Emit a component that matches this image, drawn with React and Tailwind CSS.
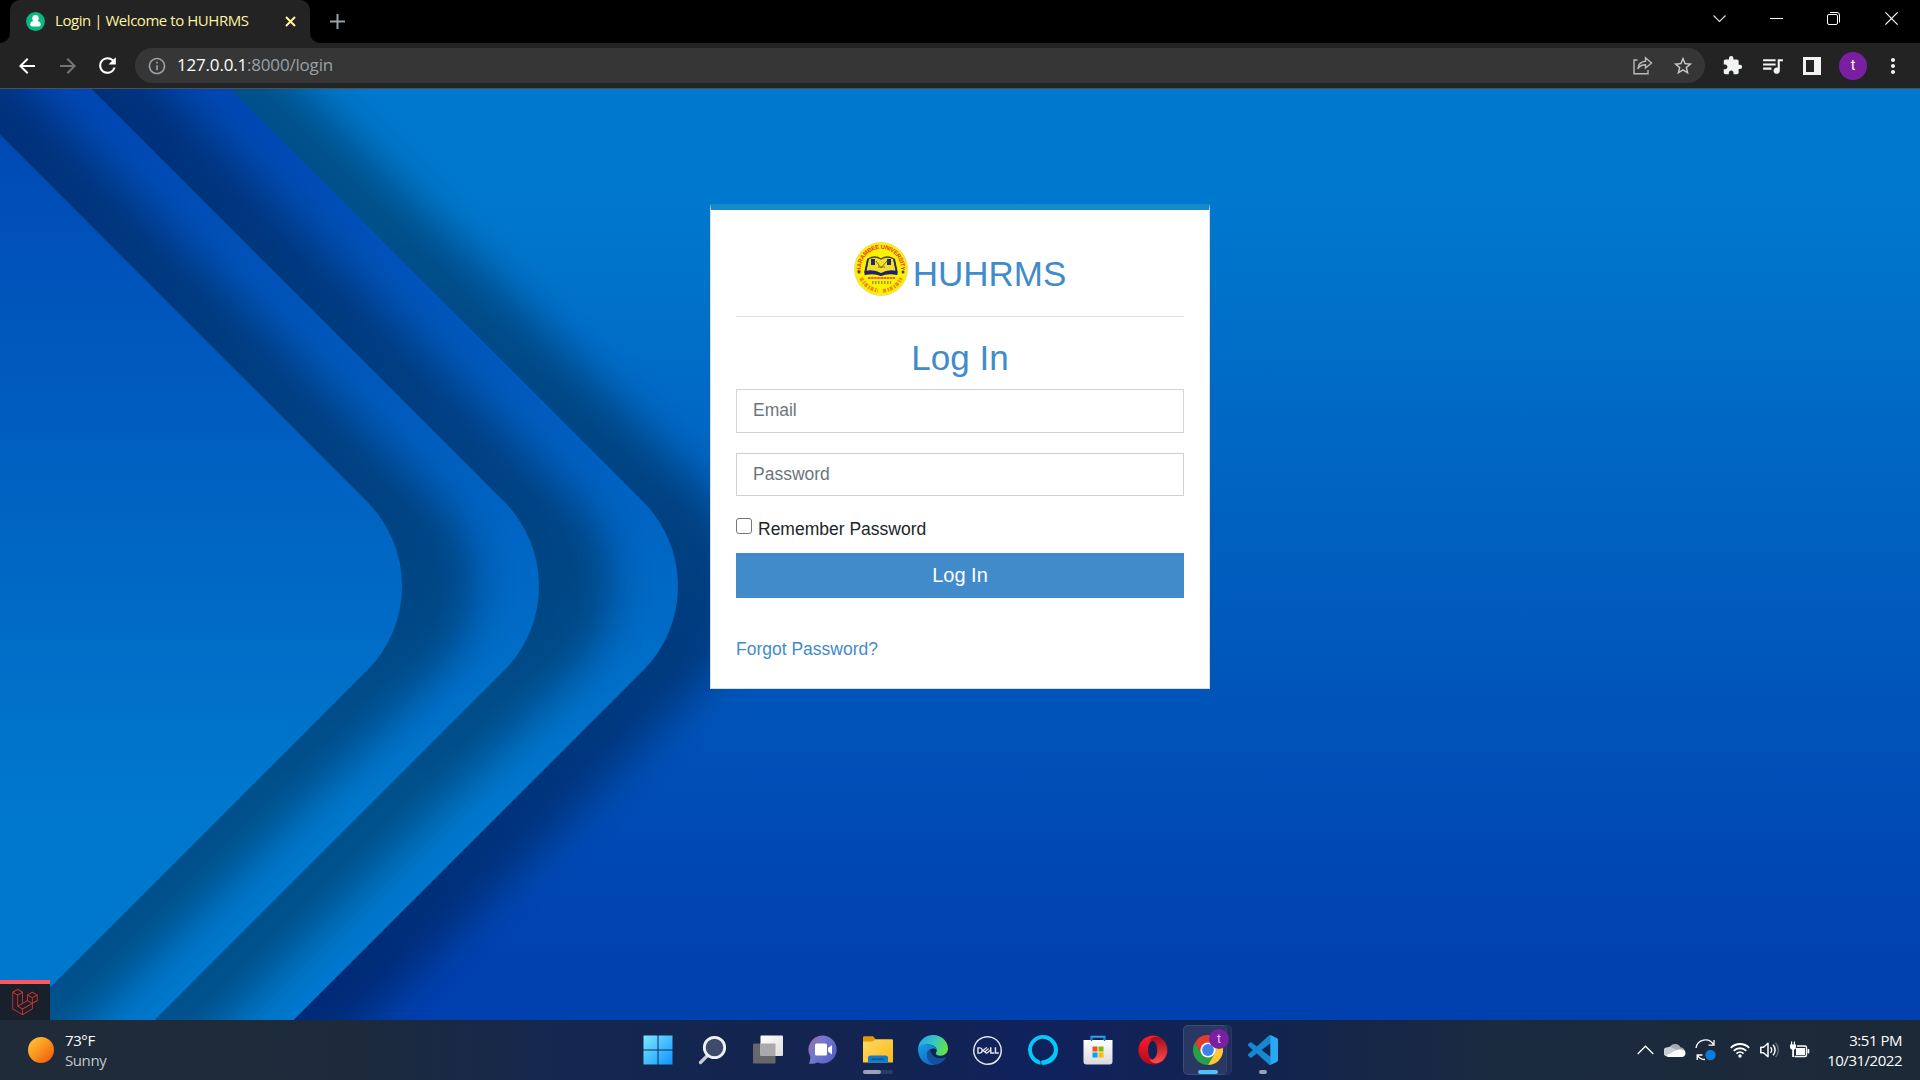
import React from "react";
import {
  MdArrowBack,
  MdArrowForward,
  MdRefresh,
  MdInfoOutline,
  MdStarBorder,
  MdExtension,
  MdQueueMusic,
  MdMoreVert,
} from "react-icons/md";
import { SiLaravel, SiDell } from "react-icons/si";

const CHEVRON = "M-400 -265.4 L367 501.6 A119.5 119.5 0 0 1 367 670.6 L-400 1437.6 Z";

function TabStrip() {
  return (
    <div className="flex h-[43px] items-start bg-black pl-[10px]">
      <div className="relative flex h-[43px] w-[300px] items-center rounded-t-[10px] bg-[#232323] pl-4 pr-[14px]">
        <svg className="absolute -left-[10px] bottom-0" width="10" height="10"><path d="M10 0V10H0A10 10 0 0 0 10 0Z" fill="#232323" /></svg>
        <svg className="absolute -right-[10px] bottom-0" width="10" height="10"><path d="M0 0V10H10A10 10 0 0 1 0 0Z" fill="#232323" /></svg>
        <svg width="19" height="19" viewBox="0 0 19 19" className="shrink-0">
          <circle cx="9.5" cy="9.5" r="9.4" fill="#0bb783" />
          <path d="M9.5 3a3.2 3.4 0 0 1 3.2 3.4c0 1-.5 2-1.1 2.6 1.900.3 3.200 1.500 3.200 3.500 0 1.300-1 1.900-2.300 1.900H6.500c-1.300 0-2.300-.6-2.300-1.900 0-2 1.300-3.200 3.200-3.500A3.600 3.600 0 0 1 6.300 6.400 3.200 3.400 0 0 1 9.500 3Z" fill="#fff" />
        </svg>
        <span className="mb-[3px] ml-[10px] grow whitespace-nowrap font-['Open_Sans','Noto_Sans',sans-serif] text-[15px] leading-5 tracking-[-0.45px] text-[#fdf3a0]">Login | Welcome to HUHRMS</span>
        <svg width="11" height="11" viewBox="0 0 11 11"><path d="M1 1 10 10M10 1 1 10" stroke="#fdf3a0" strokeWidth="2" /></svg>
      </div>
      <svg className="ml-5 mt-[14px]" width="15" height="15" viewBox="0 0 15 15"><path d="M7.500 0V15M0 7.500H15" stroke="#9aa0a6" strokeWidth="2" /></svg>
      <div className="flex grow justify-end">
        <svg className="mr-[44px] mt-[15px]" width="13" height="8" viewBox="0 0 13 8"><path d="M.5.5 6.500 6.500 12.500.5" fill="none" stroke="#ddd" strokeWidth="1.100" /></svg>
        <svg className="mr-[44px] mt-[18px]" width="13" height="1"><rect width="13" height="1" fill="#fff" /></svg>
        <svg className="mr-[45px] mt-[12px]" width="13" height="13" viewBox="0 0 13 13"><rect x=".5" y="2.500" width="10" height="10" rx="1.500" fill="none" stroke="#fff" /><path d="M3 .5H10A2.500 2.500 0 0 1 12.500 3V10.500" fill="none" stroke="#fff" /></svg>
        <svg className="mr-[22px] mt-[12px]" width="13" height="13" viewBox="0 0 13 13"><path d="M.4.4 12.600 12.600M12.600.4.4 12.600" stroke="#fff" strokeWidth="1.200" /></svg>
      </div>
    </div>
  );
}

function Toolbar() {
  return (
    <div className="flex h-[46px] items-center border-b border-[#505050] bg-[#232323] pl-[15px]">
      <MdArrowBack size={24} color="#fff" />
      <MdArrowForward size={24} color="#757575" className="ml-[17px]" />
      <MdRefresh size={25} color="#fff" className="ml-[15px]" />
      <div className="ml-[15px] flex h-[35px] w-[1570px] items-center rounded-full bg-[#363636] pl-[12px] pr-[11px]">
        <MdInfoOutline size={20} color="#9aa0a6" />
        <span className="ml-[10px] grow pb-px font-['Open_Sans','Noto_Sans',sans-serif] text-[17px] leading-6 tracking-[-0.19px] text-[#9aa0a6]">
          <span className="text-white">127.0.0.1</span>:8000/login
        </span>
        <svg className="mr-[19px]" width="20" height="19" viewBox="0 0 20 19" fill="none" stroke="#b9b9b9" strokeWidth="1.400">
          <path d="M4.500 4H1V17.800H15V14" />
          <path d="M4.800 12.800C5.400 8 8.500 5.600 12.500 5.300V1.800L18.500 7 12.500 12.100V8.800C9 8.800 6.600 10 4.800 12.800Z" />
        </svg>
        <MdStarBorder size={22} color="#c8c8c8" />
      </div>
      <MdExtension size={21} color="#f1f3f4" className="ml-[17px]" />
      <MdQueueMusic size={25} color="#f1f3f4" className="ml-[17px]" />
      <svg className="ml-[18px]" width="18" height="18"><path d="M0 0H18V18H0ZM3 3V15H11V3Z" fill="#f1f3f4" fillRule="evenodd" /></svg>
      <div className="ml-[18px] flex size-7 items-center justify-center rounded-full bg-[#7b1fa2] pb-px font-['Roboto',sans-serif] text-[14px] text-white">t</div>
      <MdMoreVert size={24} color="#f1f3f4" className="ml-[14px]" />
    </div>
  );
}

function Backdrop() {
  return (
    <svg className="absolute inset-0" width="1920" height="931" viewBox="0 89 1920 931">
      <defs>
        <linearGradient id="sky" gradientUnits="userSpaceOnUse" x1="0" y1="200" x2="0" y2="975">
          <stop offset="0" stopColor="#0078cd" />
          <stop offset="1" stopColor="#0040af" />
        </linearGradient>
        <linearGradient id="band" gradientUnits="userSpaceOnUse" x1="0" y1="110" x2="0" y2="810">
          <stop offset="0" stopColor="#0048b4" />
          <stop offset="1" stopColor="#0078cd" />
        </linearGradient>
        <filter id="soft" filterUnits="userSpaceOnUse" x="-500" y="-400" width="1500" height="2000">
          <feGaussianBlur stdDeviation="21" />
        </filter>
      </defs>
      <rect y="89" width="1920" height="931" fill="url(#sky)" />
      {[276, 137, 0].map((x) => (
        <g key={x} transform={`translate(${x} 0)`}>
          <path d={CHEVRON} transform="translate(74 0)" fill="#000" opacity=".32" filter="url(#soft)" />
          <path d={CHEVRON} fill="url(#band)" />
        </g>
      ))}
    </svg>
  );
}

function Seal() {
  return (
    <svg width="54" height="54" viewBox="0 0 54 54" className="shrink-0">
      <defs>
        <path id="rim" d="M8.500 34.500A20 20 0 1 1 45.500 34.500" />
      </defs>
      <circle cx="27" cy="27" r="26.500" fill="#fbf200" stroke="#d8d27a" strokeWidth=".7" />
      <text fontFamily="Liberation Sans, sans-serif" fontWeight="700" fontSize="6" fill="#f0301a">
        <textPath href="#rim" startOffset="5" textLength="67">HARAMBEE UNIVERSITY</textPath>
      </text>
      <path d="M14 17Q21 13 27 17Q33 13 40 17L43 32Q34 29 27 33Q20 29 11 32Z" fill="#f3df25" stroke="#4c4a36" strokeWidth="1.300" />
      <path d="M11 29Q20 27 27 31Q34 27 43 29V33Q34 31 27 34Q20 31 11 33Z" fill="#20206f" />
      <path d="M14 17 11 31M40 17 43 31" stroke="#262672" strokeWidth="1.800" />
      <path d="M19 17V23M35 17V23" stroke="#26256f" strokeWidth="4" />
      <path d="M22 19 27 26 33 19M24 25H31" stroke="#77702d" fill="none" />
      <path d="M14 36H41" stroke="#ef5a1c" strokeWidth="2.200" strokeDasharray="2.500 .6" />
      <path d="M18 40.500H37" stroke="#9a9650" strokeWidth="3" strokeDasharray="1.500 1.500" />
      <path d="M7 36Q13 47 24 48.500M29 49Q42 47 47 36" stroke="#f58a12" strokeWidth="4" strokeDasharray="3 1.600 1.500 1" fill="none" />
      <circle cx="5" cy="30" r="1.500" fill="#44443c" /><circle cx="49" cy="30" r="1.500" fill="#44443c" />
    </svg>
  );
}

function LoginCard() {
  return (
    <form className="relative mx-auto h-[485px] w-[500px] border border-t-[6px] border-[#dcdcdc] border-t-[#138bc8] bg-white px-[25px] font-['Liberation_Sans',Arial,sans-serif] text-[17.5px] text-[#212529]">
      <div className="flex h-[107px] items-start justify-center border-b border-[#e3e3e3] pt-8">
        <Seal />
        <span className="ml-[5px] mt-[11px] text-[35px] leading-[42px] text-[#428bca]">HUHRMS</span>
      </div>
      <h1 className="mt-[20px] text-center text-[35px] leading-[42px] text-[#428bca]">Log In</h1>
      <input placeholder="Email" className="mt-[10px] block h-[44px] w-full border border-[#ced4da] px-4 pb-[2px] placeholder:text-[#6c757d]" />
      <input placeholder="Password" className="mt-5 block h-[43px] w-full border border-[#d0d0d0] px-4 pb-[1px] placeholder:text-[#6c757d]" />
      <label className="mt-[18px] flex h-[28px] items-start">
        <input type="checkbox" className="mt-[4px] size-4 appearance-none rounded-[3px] border border-[#767676] bg-white" />
        <span className="ml-[6px] mt-[2px] leading-[26px]">Remember Password</span>
      </label>
      <button type="button" className="mt-[11px] block h-[45px] w-full bg-[#428bca] text-[20px] leading-[45px] text-white">Log In</button>
      <a className="mt-[38px] block leading-[26px] text-[#428bca]">Forgot Password?</a>
    </form>
  );
}

function WindowsLogo() {
  return (
    <svg width="30" height="30" viewBox="0 0 30 30">
      <defs><linearGradient id="win" x1="0" y1="0" x2="30" y2="30" gradientUnits="userSpaceOnUse"><stop stopColor="#7eeaff" /><stop offset="1" stopColor="#0b93ff" /></linearGradient></defs>
      <path d="M1 .5H14.500V14.500H.5V1ZM15.500.5H29.500V14.500H15.500ZM.5 15.500H14.500V29.500H.5ZM15.500 15.500H29.500V29.500H15.500Z" fill="url(#win)" />
    </svg>
  );
}

function SearchLogo() {
  return (
    <svg width="30" height="30" viewBox="0 0 30 30">
      <path d="M10 20 2.500 27.500" stroke="#c9ccd2" strokeWidth="3.200" strokeLinecap="round" />
      <circle cx="16.500" cy="12.500" r="10.200" fill="#3d4b6c" stroke="#f0f1f3" strokeWidth="2.800" />
    </svg>
  );
}

function TaskViewLogo() {
  return (
    <svg width="30" height="30" viewBox="0 0 30 30">
      <defs><linearGradient id="tv" x1="0" y1="0" x2="1" y2="1"><stop stopColor="#fff" /><stop offset="1" stopColor="#dedede" /></linearGradient></defs>
      <rect x="0" y="8.500" width="22.500" height="20" rx="1" fill="#65676b" />
      <rect x="7.500" y=".5" width="22.500" height="20.500" rx="1" fill="url(#tv)" />
      <path d="M7.500 8.500H22.500V21H8.500A1 1 0 0 1 7.500 20Z" fill="#a9aaab" />
    </svg>
  );
}

function ChatLogo() {
  return (
    <svg width="30" height="30" viewBox="0 0 30 30">
      <defs><linearGradient id="chat" x1="0" y1="0" x2="1" y2=".6"><stop stopColor="#a06aa5" /><stop offset=".45" stopColor="#7378cf" /><stop offset="1" stopColor="#5a62c8" /></linearGradient></defs>
      <path d="M15 .5A14 14 0 1 1 9.500 27.500C6.500 29 3.500 29 .8 28.500 2.200 26.500 2.500 24 2.200 21.200A14 14 0 0 1 15 .5Z" fill="url(#chat)" />
      <rect x="7" y="8.500" width="12" height="12" rx="1.500" fill="#fff" />
      <path d="M20 13 24 10V19.500L20 16.500Z" fill="#fff" />
    </svg>
  );
}

function FolderLogo() {
  return (
    <svg width="30" height="30" viewBox="0 0 30 30">
      <defs><linearGradient id="fold" x1="0" y1="0" x2="1" y2="1"><stop stopColor="#ffda67" /><stop offset="1" stopColor="#fdb813" /></linearGradient></defs>
      <path d="M0 2.500A1.200 1.200 0 0 1 1.200 1.300H10L13 4.500V9H0Z" fill="#e09a08" />
      <path d="M0 6.500H9.500L13 4.300H28.800A1.200 1.200 0 0 1 30 5.500V27.500H0Z" fill="url(#fold)" />
      <path d="M5 27.500V23A2.500 2.500 0 0 1 7.500 20.500H22.500A2.500 2.500 0 0 1 25 23V27.500Z" fill="#0f7bd0" />
      <path d="M8.500 24.200H21.500" stroke="#0b4a88" strokeWidth="1.200" />
    </svg>
  );
}

function EdgeLogo() {
  return (
    <svg width="30" height="30" viewBox="0 0 30 30">
      <defs>
        <linearGradient id="edgeTop" x1="0" y1=".3" x2="1" y2=".6"><stop stopColor="#28a8e8" /><stop offset=".5" stopColor="#33c6c2" /><stop offset="1" stopColor="#6ae43f" /></linearGradient>
        <linearGradient id="edgeLow" x1="0" y1="0" x2=".6" y2="1"><stop stopColor="#1b9ee2" /><stop offset="1" stopColor="#0f6cc4" /></linearGradient>
      </defs>
      <path d="M0 14C.5 6 7 0 15 0C24 0 30 6.500 30 13.500C30 18 26.500 20.700 22.500 20.700C19.500 20.700 17.800 19.700 17.800 18.600C17.800 17.700 18.800 17.200 18.800 15.300C18.800 12.500 15.500 10 11 9.600C5 9.300 1 11.500 0 14Z" fill="url(#edgeTop)" />
      <path d="M0 14C1 10.500 5 9 9 9.200C14.500 9.500 18.800 12.500 18.800 15.300C18 12.700 12 12.500 9.500 17C7.500 21.500 11.500 28 17 29.800C7 31.200 0 24 0 14Z" fill="url(#edgeLow)" />
      <path d="M12.500 14C7 16.500 7.500 27.500 17 29.800C21.500 29.300 25.500 26.800 28 22.800C28.300 22.200 27.800 21.900 27.200 22.200C20 25 12 21.500 12.500 14Z" fill="#11529e" />
    </svg>
  );
}

function AlexaLogo() {
  return (
    <svg width="30" height="30" viewBox="0 0 30 30">
      <path d="M12.600 25.300A11 11 0 1 1 25.700 17.500C23.500 22.500 19 24.700 13.500 26.200V29.900A15 15 0 1 0 13.500.1 15 15 0 0 0 12.600 29.800Z" fill="none" />
      <path fillRule="evenodd" d="M15 0A15 15 0 0 1 15 30Q13.200 30 13.200 28V25.800C19 25 23.500 22 25.600 17.300A11 11 0 1 0 11.300 25.200Q12.600 25.800 12.600 27.200V29.800A15 15 0 0 1 15 0Z" fill="#05c8fa" />
    </svg>
  );
}

function StoreLogo() {
  return (
    <svg width="30" height="30" viewBox="0 0 30 30">
      <defs><linearGradient id="bag" x1="0" y1="0" x2="0" y2="1"><stop stopColor="#fff" /><stop offset="1" stopColor="#d8d9dc" /></linearGradient></defs>
      <path d="M8.500 6.500V1.800H21.500V6.500" fill="none" stroke="#2aa4ea" strokeWidth="2" />
      <path d="M.5 5H29.500V26.500A3 3 0 0 1 26.500 29.500H3.500A3 3 0 0 1 .5 26.500Z" fill="url(#bag)" />
      <path d="M8.500 2.500V6M21.500 2.500V6" stroke="#1879c4" strokeWidth="1.400" />
      <path d="M9.500 11.500H14.500V16.500H9.500Z" fill="#f25022" /><path d="M15.500 11.500H20.500V16.500H15.500Z" fill="#7fba00" />
      <path d="M9.500 17.500H14.500V22.500H9.500Z" fill="#00a4ef" /><path d="M15.500 17.500H20.500V22.500H15.500Z" fill="#ffb900" />
    </svg>
  );
}

function OperaLogo() {
  return (
    <svg width="30" height="30" viewBox="0 0 30 30">
      <defs>
        <linearGradient id="opA" x1="0" y1="0" x2="0" y2="1"><stop stopColor="#ff1b2d" /><stop offset="1" stopColor="#b3091b" /></linearGradient>
        <linearGradient id="opB" x1="0" y1="0" x2="0" y2="1"><stop stopColor="#a00d1b" /><stop offset="1" stopColor="#ff4b4b" /></linearGradient>
      </defs>
      <path d="M15 .5A14.500 14.500 0 1 0 24.700 25.700C21 28.200 10 27 10 15S21 2 24.700 4.300A14.500 14.500 0 0 0 15 .5Z" fill="url(#opA)" />
      <path d="M11 6C15 0 20.500 1.500 24.700 4.300A14.500 14.500 0 0 1 24.700 25.700C20.500 28.500 15 30 11 24C22 29 22 1 11 6Z" fill="url(#opB)" />
    </svg>
  );
}

function ChromeLogo() {
  return (
    <svg width="30" height="30" viewBox="0 0 30 30">
      <path d="M2 7.500A15 15 0 0 0 15 30L21.500 18.700 15 15 8.500 18.800Z" fill="#2a9f49" />
      <path d="M28 7.500A15 15 0 0 1 15 30L21.500 18.700V11L15 7.500Z" fill="#fcc934" />
      <path d="M2 7.500A15 15 0 0 1 28 7.500H15L8.500 18.800Z" fill="#e33b2e" />
      <circle cx="15" cy="15" r="7.600" fill="#fff" /><circle cx="15" cy="15" r="5.900" fill="#3b82ee" />
    </svg>
  );
}

function CodeLogo() {
  return (
    <svg width="30" height="30" viewBox="0 0 24 24">
      <path d="M23.150 2.587L18.210.21a1.494 1.494 0 0 0-1.705.29l-9.460 8.630-4.120-3.128a.999.999 0 0 0-1.276.057L.327 7.261A1 1 0 0 0 .326 8.740L3.899 12 .326 15.260a1 1 0 0 0 .001 1.479L1.650 17.940a.999.999 0 0 0 1.276.057l4.120-3.128 9.460 8.630a1.492 1.492 0 0 0 1.704.29l4.942-2.377A1.500 1.500 0 0 0 24 20.060V3.939a1.500 1.500 0 0 0-.85-1.352zm-5.146 14.861L10.826 12l7.178-5.448v10.896z" fill="#1688d0" />
      <path d="M18 .2 23.150 2.587A1.500 1.500 0 0 1 24 3.940V20.060A1.500 1.500 0 0 1 23.150 21.400L18 23.800Z" fill="#2aa9f2" />
    </svg>
  );
}

const APPS = [
  { name: "start", Logo: WindowsLogo },
  { name: "search", Logo: SearchLogo },
  { name: "tasks", Logo: TaskViewLogo },
  { name: "chat", Logo: ChatLogo },
  { name: "files", Logo: FolderLogo },
  { name: "edge", Logo: EdgeLogo },
  { name: "dell", Logo: () => <SiDell size={29} color="#e4e7ee" /> },
  { name: "alexa", Logo: AlexaLogo },
  { name: "store", Logo: StoreLogo },
  { name: "opera", Logo: OperaLogo },
  { name: "chrome", Logo: ChromeLogo },
  { name: "code", Logo: CodeLogo },
];

function AppButton({ name, Logo }) {
  return (
    <div className="relative flex h-[60px] w-[55px] items-center justify-center">
      {name === "chrome" && (
        <>
          <div className="absolute left-[3px] top-[5px] h-[50px] w-[49px] rounded-[5px] border border-white/5 bg-white/5" />
          <div className="absolute left-[3px] top-[5px] h-[50px] w-[44px] rounded-[5px] border border-white/5 bg-white/5" />
        </>
      )}
      <div className="relative"><Logo /></div>
      {name === "chrome" && (
        <>
          <div className="absolute left-[29px] top-[9px] flex size-5 items-center justify-center rounded-full bg-[#7b1fa2] font-['Roboto',sans-serif] text-[12px] text-[#e6cdf0]">t</div>
          <div className="absolute bottom-[6px] left-[18px] h-1 w-5 rounded-full bg-[#4cc2ff]" />
        </>
      )}
      {name === "files" && (
        <div className="absolute bottom-[6px] left-[13px] h-1 w-[30px] rounded-full bg-white/10">
          <div className="h-1 w-[18px] rounded-full bg-[#9da4b8]" />
        </div>
      )}
      {name === "code" && <div className="absolute bottom-[6px] left-[24px] h-1 w-2 rounded-full bg-[#9da1ab]" />}
    </div>
  );
}

function Tray() {
  return (
    <div className="flex h-[60px] items-center pr-[18px] text-white">
      <svg width="17" height="10" viewBox="0 0 17 10" className="mr-[10px]"><path d="M.7 9 8.500 1.200 16.300 9" fill="none" stroke="#fff" strokeWidth="1.300" /></svg>
      <svg width="22" height="14" viewBox="0 0 22 14" className="mr-[9px]">
        <path d="M6 3.500A6 5.500 0 0 1 16.500 4.300C19 4.500 21 6.300 21 9L14 12 1 9C2 6 3 4.500 6 3.500Z" fill="#a6abb1" />
        <path d="M4.500 4.200C7.500 3.200 9.500 5 12.500 7L3 13.500A4.600 4.600 0 0 1 4.500 4.200Z" fill="#c9ccd0" />
        <path d="M2.500 12.500 12 7.300C14 6.300 21.500 5.700 21.500 10A3.800 3.800 0 0 1 17.500 14H4.500Q3.300 14 2.500 12.500Z" fill="#fff" />
      </svg>
      <svg width="22" height="22" viewBox="0 0 22 22" className="mr-[13px]" fill="none" stroke="#fff" strokeWidth="1.300">
        <path d="M1 9A9.500 9.500 0 0 1 18.500 5.500M19 1V6.200H13.500" />
        <path d="M2.200 21V16H7.500M2.500 16.300A9 9 0 0 0 10 20.500" />
        <circle cx="15.500" cy="16" r="5.200" fill="#0b7bdc" stroke="none" />
      </svg>
      <svg width="20" height="16" viewBox="0 0 20 16" className="mr-[10px]" fill="none" stroke="#fff" strokeWidth="1.800">
        <path d="M.8 5.800A13 13 0 0 1 19.200 5.800M3.700 8.800A9 9 0 0 1 16.300 8.800M6.500 11.600A5 5 0 0 1 13.500 11.600" />
        <circle cx="10" cy="14" r="1.700" fill="#fff" stroke="none" />
      </svg>
      <svg width="20" height="16" viewBox="0 0 20 16" className="mr-[9px]" fill="none" stroke="#fff" strokeWidth="1.500">
        <path d="M.8 5.300H3.500L8 1.300V14.700L3.500 10.700H.8Z" strokeLinejoin="round" />
        <path d="M10.500 5.200A4 4 0 0 1 10.500 10.800M13 2.800A7.500 7.500 0 0 1 13 13.200" /><path d="M15.500.8A10.500 10.500 0 0 1 15.500 15.200" stroke="#5d6873" />
      </svg>
      <svg width="21" height="17" viewBox="0 0 21 17" className="mr-[18px] mt-[-2px]">
        <path d="M1 3.500H7V6.500A2.500 2.500 0 0 1 5 8.800V16H3.200V8.800A2.500 2.500 0 0 1 1 6.500ZM2 .5H3.200V4H2ZM4.800.5H6V4H4.800Z" fill="#fff" />
        <path d="M8 5H16Q17.500 5 17.500 6.500V14Q17.500 15.500 16 15.500H5.500" fill="none" stroke="#fff" strokeWidth="1.400" />
        <rect x="7" y="7" width="9" height="7" fill="#fff" /><rect x="18.500" y="8" width="1.800" height="4.500" rx=".8" fill="#fff" />
      </svg>
      <div className="flex w-[74px] flex-col items-end whitespace-nowrap font-['Open_Sans','Noto_Sans',sans-serif] text-[15px] leading-5 tracking-[-0.48px]">
        <span className="-mt-px">3:51 PM</span>
        <span>10/31/2022</span>
      </div>
    </div>
  );
}

function Taskbar() {
  return (
    <div className="grid h-[60px] grid-cols-[1fr_660px_1fr] bg-[linear-gradient(90deg,#1f2b38_0%,#1d2a3b_18%,#142750_30%,#12244f_45%,#10225c_54%,#12244f_66%,#1a2a3f_78%,#1c2936_100%)]">
      <div className="flex items-center pl-[28px]">
        <div className="size-[26px] rounded-full bg-[linear-gradient(135deg,#fbc134_10%,#f9931e_50%,#f2640f_85%)]" />
        <div className="ml-[11px] flex flex-col font-['Open_Sans','Noto_Sans',sans-serif] text-[15px] leading-5 tracking-[-0.4px]">
          <span className="text-white">73°F</span>
          <span className="text-[#c3c8cd]">Sunny</span>
        </div>
      </div>
      <div className="flex">
        {APPS.map((app) => <AppButton key={app.name} {...app} />)}
      </div>
      <div className="flex justify-end"><Tray /></div>
    </div>
  );
}

export default function App() {
  return (
    <div className="flex h-[1080px] w-[1920px] flex-col overflow-hidden">
      <TabStrip />
      <Toolbar />
      <main className="relative flex h-[931px] flex-col overflow-hidden pt-[115px]">
        <Backdrop />
        <LoginCard />
        <div className="relative mt-auto flex h-10 w-[50px] items-center justify-center border-t-4 border-[#ff5661] bg-[#18202b]">
          <SiLaravel size={26} color="#e3342f" />
        </div>
      </main>
      <Taskbar />
    </div>
  );
}
